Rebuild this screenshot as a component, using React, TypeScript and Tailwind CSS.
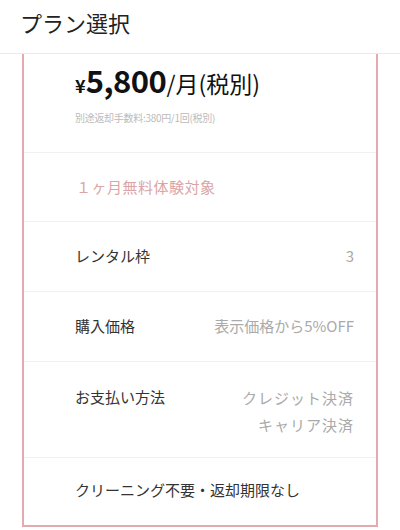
const font = { fontFamily: '"Noto Sans CJK JP", "Noto Sans", sans-serif' };

type Row = { label: string; values?: string[] };

const rows: Row[] = [
  { label: 'レンタル枠', values: ['3'] },
  { label: '購入価格', values: ['表示価格から5%OFF'] },
];

export default function App() {
  return (
    <div className="w-[400px] h-[530px] bg-white overflow-hidden" style={font}>
      {/* Header */}
      <div className="h-[54px] flex items-center pl-[20px] border-b border-[#ececec]">
        <h1 className="text-[22px] text-[#222] leading-none -mt-[9px]">プラン選択</h1>
      </div>

      {/* Plan card */}
      <div className="mx-[22px] border-2 border-t-0 border-[#e4aab0]">
        <div className="h-[99px] pl-[51px] pt-[3px] border-b border-[#f1f1f1]">
          <div className="flex items-baseline text-[#111] leading-none h-[40px] pt-[7px]">
            <span className="text-[18px] font-bold">¥</span>
            <span className="text-[31px] font-bold tracking-[-0.5px]">5,800</span>
            <span className="text-[23px]">/月(税別)</span>
          </div>
          <p className="mt-[16px] text-[10px] text-[#bbb] leading-none tracking-[-0.3px]">
            別途返却手数料:380円/1回(税別)
          </p>
        </div>

        <div className="h-[69px] flex items-center pl-[52px] border-b border-[#f1f1f1]">
          <span className="text-[15px] text-[#dba4a6] tracking-[0.5px]">１ヶ月無料体験対象</span>
        </div>

        {rows.map((row) => (
          <div
            key={row.label}
            className="h-[70px] flex items-center justify-between pl-[51px] pr-[22px] border-b border-[#f1f1f1]"
          >
            <span className="text-[15px] text-[#333]">{row.label}</span>
            <span className="text-[15px] text-[#aaa]">{row.values?.[0]}</span>
          </div>
        ))}

        <div className="h-[96px] flex justify-between pl-[51px] pr-[22px] pt-[24px] border-b border-[#f1f1f1]">
          <span className="text-[15px] text-[#333] leading-[22px]">お支払い方法</span>
          <div className="text-right text-[15px] text-[#aaa] leading-[27px] -mt-[2px] tracking-[1px]">
            <div>クレジット決済</div>
            <div>キャリア決済</div>
          </div>
        </div>

        <div className="h-[67px] flex items-center pl-[51px]">
          <span className="text-[15px] text-[#333] -mt-[2px]">クリーニング不要・返却期限なし</span>
        </div>
      </div>
    </div>
  );
}
